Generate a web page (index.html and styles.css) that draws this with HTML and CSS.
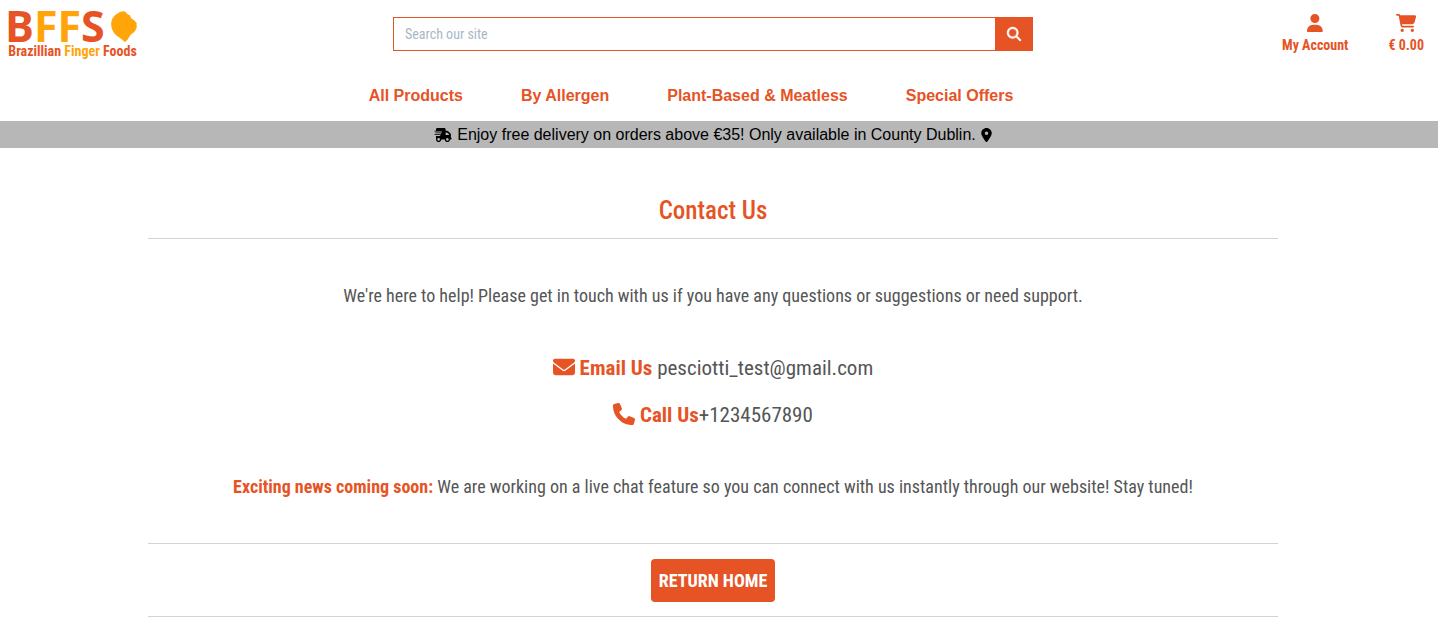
FILE: index.html
```html
<!DOCTYPE html>
<html lang="en">
<head>
<meta charset="utf-8">
<meta name="viewport" content="width=device-width, initial-scale=1">
<title>Contact Us | BFFs</title>
<link rel="stylesheet" href="styles.css">
</head>
<body>
<header>
  <div class="topbar">
    <a href="#" class="logo">
      <span class="logo-mark"><span>B</span><span class="gold">FF</span><span>S</span>
        <svg class="logo-drop" viewBox="0 0 26 31" aria-hidden="true"><path d="M10 .800C12 .200 13.500 0 14.500 1L16.500 3.200C17.200 3.800 18.500 3.700 19 4.500L20 7C20.500 8 22 8 22.800 9L25.300 11.500C26.200 12.500 25.200 13.500 25.600 14.500C26.200 16 25.200 18 24 20C22.800 22 20.500 22.500 19.500 24C18 26 17.300 28 15.500 29.800C14.500 31 13.300 31 12.300 29.800C10.500 27.500 8.500 26.800 5.500 24.500C2 21.500 0 17.500 .200 12.500C.500 7.500 3.500 4 6.500 2.500C7.500 2 8.500 1.200 10 .800Z"/></svg>
      </span>
      <span class="logo-text">Brazillian <span class="gold">Finger</span> Foods</span>
    </a>
    <form class="search">
      <input type="text" aria-label="Search our site" placeholder="Search our site">
      <button type="submit" aria-label="Search"><svg viewBox="0 0 512 512" aria-hidden="true"><path d="M416 208c0 45.900-14.900 88.300-40 122.700L502.600 457.400c12.500 12.500 12.500 32.800 0 45.300s-32.800 12.500-45.300 0L330.700 376c-34.400 25.200-76.800 40-122.700 40C93.100 416 0 322.900 0 208S93.100 0 208 0S416 93.100 416 208zM208 352a144 144 0 1 0 0-288 144 144 0 1 0 0 288z"/></svg></button>
    </form>
    <div class="tools">
      <a href="#" class="tool"><svg viewBox="0 0 448 512" aria-hidden="true"><path d="M224 256A128 128 0 1 0 224 0a128 128 0 1 0 0 256zm-45.700 48C79.800 304 0 383.800 0 482.300C0 498.700 13.300 512 29.700 512H418.300c16.400 0 29.700-13.300 29.700-29.700C448 383.800 368.200 304 269.700 304H178.300z"/></svg><span>My Account</span></a>
      <a href="#" class="tool"><svg viewBox="0 0 576 512" aria-hidden="true"><path d="M0 24C0 10.700 10.700 0 24 0H69.500c22 0 41.500 12.800 50.600 32h411c26.300 0 45.500 25 38.600 50.400l-41 152.300c-8.500 31.400-37 53.300-69.500 53.300H170.700l5.400 28.500c2.200 11.300 12.100 19.500 23.600 19.500H488c13.300 0 24 10.700 24 24s-10.700 24-24 24H199.700c-34.600 0-64.300-24.600-70.700-58.500L77.400 54.500c-.7-3.800-4-6.500-7.900-6.500H24C10.700 48 0 37.300 0 24zM128 464a48 48 0 1 1 96 0 48 48 0 1 1-96 0zm336-48a48 48 0 1 1 0 96 48 48 0 1 1 0-96z"/></svg><span>€ 0.00</span></a>
    </div>
  </div>
  <nav class="nav">
    <a href="#">All Products</a>
    <a href="#">By Allergen</a>
    <a href="#">Plant-Based &amp; Meatless</a>
    <a href="#">Special Offers</a>
  </nav>
  <div class="banner">
    <svg class="truck" viewBox="0 0 640 512" aria-hidden="true"><path d="M112 0C85.500 0 64 21.500 64 48V96H16c-8.800 0-16 7.200-16 16s7.200 16 16 16H272c8.800 0 16 7.200 16 16s-7.200 16-16 16H48c-8.800 0-16 7.200-16 16s7.200 16 16 16H240c8.800 0 16 7.200 16 16s-7.200 16-16 16H16c-8.800 0-16 7.200-16 16s7.200 16 16 16H208c8.800 0 16 7.200 16 16s-7.200 16-16 16H64V416c0 53 43 96 96 96s96-43 96-96H384c0 53 43 96 96 96s96-43 96-96h32c17.700 0 32-14.300 32-32s-14.300-32-32-32V237.300c0-17-6.700-33.300-18.700-45.300L512 114.700c-12-12-28.300-18.700-45.300-18.700H416V48c0-26.500-21.500-48-48-48H112zM544 237.300V256H416V160h50.700L544 237.300zM160 368a48 48 0 1 1 0 96 48 48 0 1 1 0-96zm272 48a48 48 0 1 1 96 0 48 48 0 1 1-96 0z"/></svg>
    <span>Enjoy free delivery on orders above €35! Only available in County Dublin.</span>
    <svg class="pin" viewBox="0 0 384 512" aria-hidden="true"><path d="M215.700 499.200C267 435 384 279.400 384 192C384 86 298 0 192 0S0 86 0 192c0 87.400 117 243 168.300 307.200c12.300 15.300 35.100 15.300 47.400 0zM192 128a64 64 0 1 1 0 128 64 64 0 1 1 0-128z"/></svg>
  </div>
</header>
<main>
  <h1>Contact Us</h1>
  <hr>
  <section class="details">
    <p>We're here to help! Please get in touch with us if you have any questions or suggestions or need support.</p>
    <div class="contacts">
      <p><svg viewBox="0 0 512 512" aria-hidden="true"><path d="M48 64C21.500 64 0 85.500 0 112c0 15.100 7.100 29.300 19.200 38.400L236.800 313.600c11.400 8.500 27 8.500 38.400 0L492.800 150.400c12.100-9.100 19.200-23.300 19.200-38.400c0-26.500-21.500-48-48-48H48zM0 176V384c0 35.300 28.700 64 64 64H448c35.300 0 64-28.700 64-64V176L294.400 339.200c-22.800 17.100-54 17.100-76.800 0L0 176z"/></svg> <strong>Email Us</strong> pesciotti_test@gmail.com</p>
      <p><svg viewBox="0 0 512 512" aria-hidden="true"><path d="M164.900 24.600c-7.700-18.600-28-28.500-47.400-23.200l-88 24C12.100 30.200 0 46 0 64C0 311.400 200.600 512 448 512c18 0 33.800-12.100 38.600-29.500l24-88c5.300-19.400-4.600-39.700-23.200-47.400l-96-40c-16.300-6.800-35.200-2.100-46.300 11.600L304.700 368C234.300 334.700 177.300 277.700 144 207.300L193.300 167c13.700-11.200 18.400-30 11.600-46.300l-40-96z"/></svg> <strong>Call Us</strong>+1234567890</p>
    </div>
    <p><strong>Exciting news coming soon:</strong> We are working on a live chat feature so you can connect with us instantly through our website! Stay tuned!</p>
  </section>
  <hr>
  <a href="#" class="home">RETURN HOME</a>
  <hr>
</main>
</body>
</html>
```
FILE: styles.css
```css
:root {
  --orange: #e65325;
  --gold: #ffa50a;
  --condensed: "Roboto Condensed", "Liberation Sans Narrow", Roboto, sans-serif;
}

* { box-sizing: border-box; }

body {
  margin: 0;
  background: #fff;
  color: #555;
  font-family: var(--condensed);
}

a { color: var(--orange); text-decoration: none; }
svg { fill: currentColor; }
p { margin: 0; }
strong { color: var(--orange); }

.topbar {
  display: grid;
  grid-template-columns: 1fr minmax(280px, 640px) 1fr;
  align-items: center;
  padding-right: 12px;
  height: 68px;
}

.logo {
  display: flex;
  flex-direction: column;
  align-items: flex-end;
  justify-self: start;
  padding: 2px 0 0 5px;
  font-weight: 700;
}

.logo-mark {
  display: flex;
  align-items: center;
  font: 700 43px/32px "Open Sans", sans-serif;
}

.gold { color: var(--gold); }
.logo-drop { width: 26px; height: 31px; margin-left: 6px; color: var(--gold); }
.logo-text { font-size: 14px; line-height: 18px; white-space: nowrap; }

.search { display: flex; height: 34px; }

.search input {
  flex: 1;
  min-width: 0;
  padding: 0 11px;
  border: 1px solid var(--orange);
  border-right: 0;
  border-radius: 0;
  outline: 0;
  background: #fff;
  color: #555;
  font: 14px var(--condensed);
}

.search input::placeholder { color: #aab7c4; opacity: 1; }

.search button {
  display: flex;
  align-items: center;
  justify-content: center;
  width: 38px;
  padding: 0;
  border: 0;
  background: var(--orange);
  color: #fff;
}

.search button svg { width: 14px; height: 14px; stroke: currentColor; stroke-width: 16px; overflow: visible; }

.tools { display: flex; justify-self: end; gap: 40px; padding-right: 2px; }

.tool {
  display: flex;
  flex-direction: column;
  align-items: center;
  gap: 4px;
  font-size: 14px;
  font-weight: 700;
  line-height: 18px;
}

.tool svg { height: 18px; }

.nav {
  display: flex;
  flex-wrap: wrap;
  justify-content: center;
  gap: 8px 58px;
  padding: 18px 56px 16px 0;
  font: 700 16px/19px "Liberation Sans", Arial, sans-serif;
}

.banner {
  display: flex;
  align-items: center;
  justify-content: center;
  gap: 5px;
  padding-right: 12px;
  background: #b7b7b7;
  color: #000;
  font: 16px/27px "Liberation Sans", Arial, sans-serif;
}

.truck { width: 18px; height: 14px; }
.pin { width: 11px; height: 14px; }

main {
  display: flex;
  flex-direction: column;
  align-items: center;
  padding: 46px 160px 16px 148px;
  text-align: center;
}

h1 {
  margin: 0;
  color: var(--orange);
  font-size: 25px;
  font-weight: 500;
  line-height: 33px;
}

hr { width: 100%; margin: 11px 0 0; border: 0; border-top: 1px solid #d3d3d3; }

.details {
  display: flex;
  flex-direction: column;
  gap: 46px;
  padding: 44px 0 32px;
  font-size: 18px;
  line-height: 26px;
}

.contacts {
  display: grid;
  gap: 21px;
  font-size: 21px;
}

.contacts svg { width: 22px; height: 22px; vertical-align: -3px; color: var(--orange); }

.home {
  margin: 15px 0 3px;
  padding: 8px;
  border-radius: 4px;
  background: var(--orange);
  color: #fff;
  font-size: 18px;
  font-weight: 700;
  line-height: 27px;
}
```
